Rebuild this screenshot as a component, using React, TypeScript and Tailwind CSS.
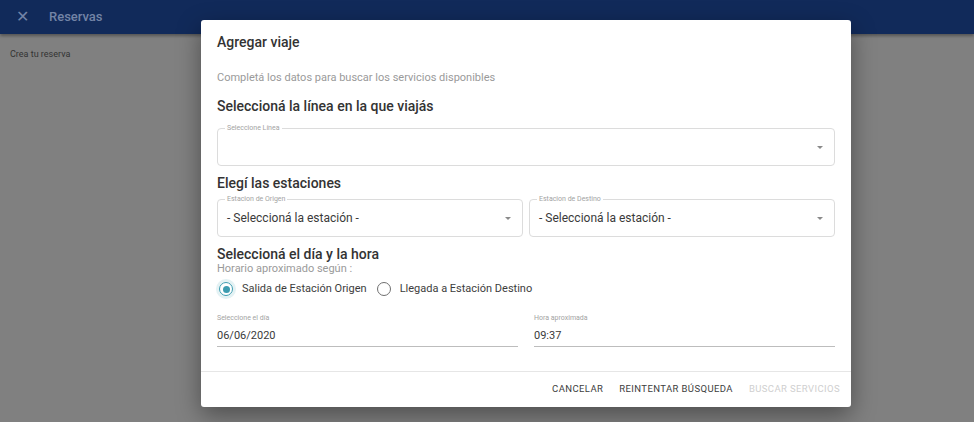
import React from "react";

function Arrow() {
  return <span className="ml-auto h-0 w-0 border-x-[3.5px] border-t-[3.5px] border-x-transparent border-t-[#8a8a8a]" />;
}

function OutlinedSelect({ label, value }: { label: string; value?: string }) {
  return (
    <div className="relative flex h-[38px] flex-1 items-center rounded-[4px] border border-[#dcdcdc] pl-[9px] pr-[11px]">
      <span className="absolute -top-[6px] left-[7px] bg-white px-[2px] text-[7px] leading-[10px] text-[#a3a3a3]">
        {label}
      </span>
      {value && <span className="text-[12px] text-[#3a3a3a]">{value}</span>}
      <Arrow />
    </div>
  );
}

function Radio({ checked, label }: { checked?: boolean; label: string }) {
  return (
    <label className="flex items-center gap-[9px]">
      {checked ? (
        <span className="flex h-[14px] w-[14px] items-center justify-center rounded-full border-[1.5px] border-[#3c9cb0] shadow-[0_0_0_3px_#e4f2f4]">
          <span className="h-[7px] w-[7px] rounded-full bg-[#3c9cb0]" />
        </span>
      ) : (
        <span className="h-[14px] w-[14px] rounded-full border-[1.5px] border-[#6f6f6f]" />
      )}
      <span className="text-[11px] text-[#3d3d3d]">{label}</span>
    </label>
  );
}

function DateField({ label, value }: { label: string; value: string }) {
  return (
    <div className="flex flex-1 flex-col">
      <span className="text-[7px] leading-[10px] text-[#a3a3a3]">{label}</span>
      <span className="mt-[5px] text-[11px] leading-[16px] text-[#3a3a3a]">{value}</span>
      <span className="mt-[2px] h-px bg-[#bdbdbd]" />
    </div>
  );
}

export default function App() {
  return (
    <div className="relative h-[422px] w-full overflow-hidden bg-[#808080]" style={{ fontFamily: "Roboto, 'Liberation Sans', sans-serif" }}>
      <header className="flex h-[34px] items-center gap-[20px] bg-[#112a5a] px-[16px] shadow-[0_2px_3px_rgba(0,0,0,0.35)]">
        <span className="text-[16px] leading-none text-[#7384a6]">✕</span>
        <span className="text-[13px] font-medium text-[#7384a6]">Reservas</span>
      </header>
      <p className="mt-[14px] pl-[10px] text-[9px] text-[#333]">Crea tu reserva</p>

      <div className="absolute left-[201px] top-[20px] flex h-[387px] w-[650px] flex-col rounded-[3px] bg-white shadow-[0_8px_24px_rgba(0,0,0,0.4)]">
        <div className="flex flex-1 flex-col px-[16px]">
          <h2 className="mt-[12px] text-[14px] font-medium leading-[20px] text-[#333]">Agregar viaje</h2>
          <p className="mt-[18px] text-[11px] leading-[16px] text-[#9a9a9a]">
            Completá los datos para buscar los servicios disponibles
          </p>
          <h3 className="mt-[10px] text-[14px] font-medium leading-[20px] text-[#333]">
            Seleccioná la línea en la que viajás
          </h3>
          <div className="mt-[12px] flex">
            <OutlinedSelect label="Seleccione Línea" />
          </div>
          <h3 className="mt-[7px] text-[14px] font-medium leading-[20px] text-[#333]">Elegí las estaciones</h3>
          <div className="mt-[6px] flex gap-[6px]">
            <OutlinedSelect label="Estacion de Origen" value="- Seleccioná la estación -" />
            <OutlinedSelect label="Estacion de Destino" value="- Seleccioná la estación -" />
          </div>
          <h3 className="mt-[7px] text-[14px] font-medium leading-[20px] text-[#333]">
            Seleccioná el día y la hora
          </h3>
          <p className="mt-[-2px] text-[11px] leading-[14px] text-[#9a9a9a]">Horario aproximado según :</p>
          <div className="mt-[3px] flex h-[20px] items-center gap-[10px] pl-[2px]">
            <Radio checked label="Salida de Estación Origen" />
            <Radio label="Llegada a Estación Destino" />
          </div>
          <div className="mt-[14px] flex gap-[16px]">
            <DateField label="Seleccione el día" value="06/06/2020" />
            <DateField label="Hora aproximada" value="09:37" />
          </div>
        </div>
        <div className="flex h-[36px] items-center justify-end gap-[16px] border-t border-[#e6e6e6] pr-[11px] text-[9.5px] tracking-[0.4px]">
          <button className="text-[#3d3d3d]">CANCELAR</button>
          <button className="text-[#3d3d3d]">REINTENTAR BÚSQUEDA</button>
          <button className="text-[#cfcfcf]">BUSCAR SERVICIOS</button>
        </div>
      </div>
    </div>
  );
}
